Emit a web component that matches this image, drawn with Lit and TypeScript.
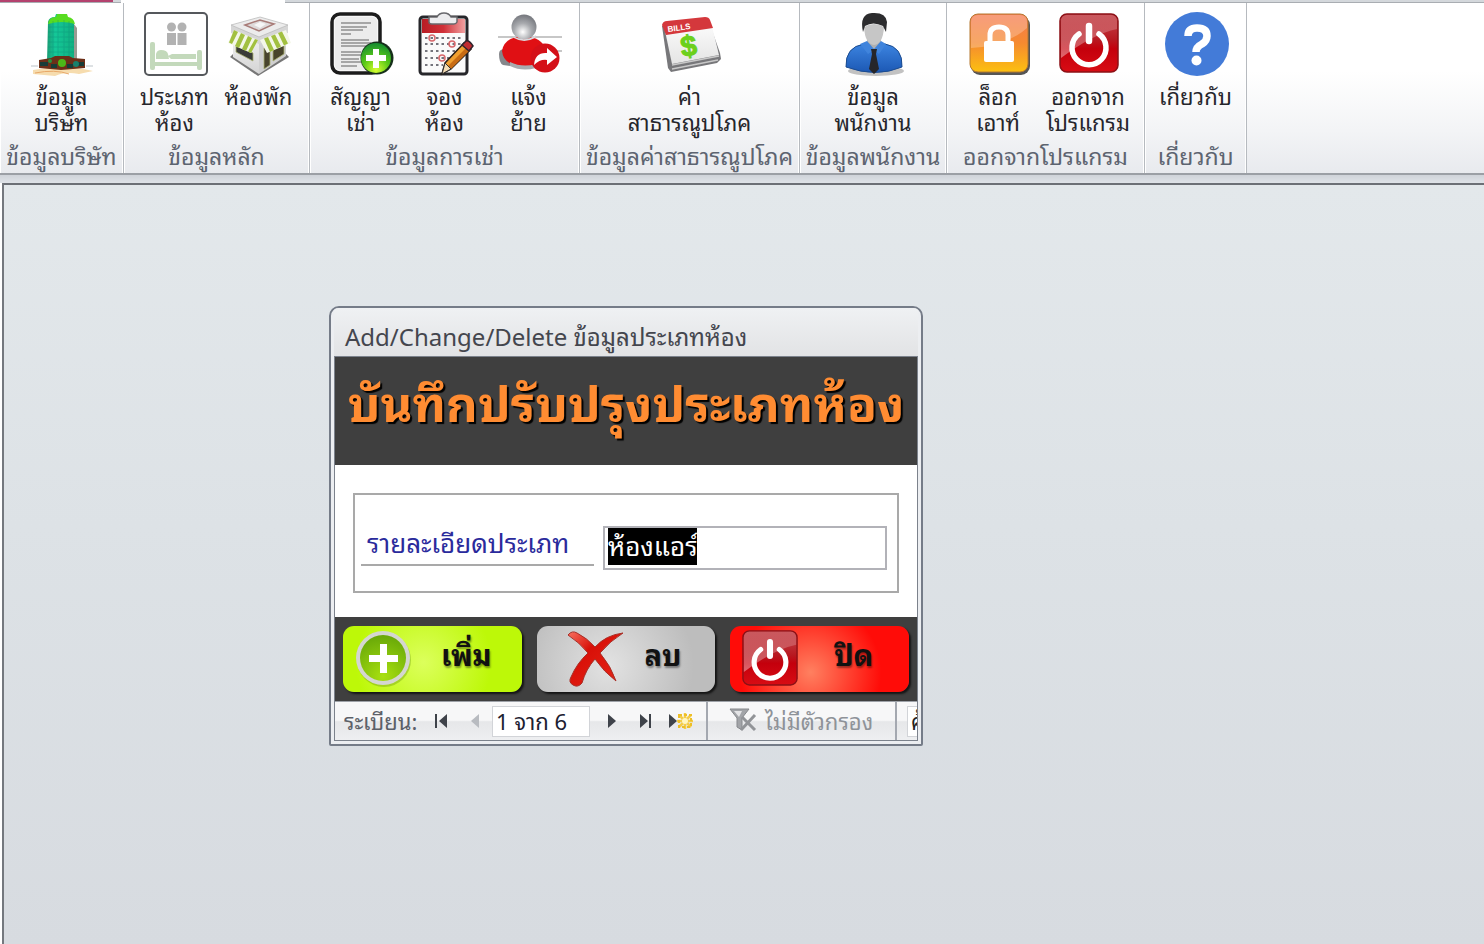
import { LitElement, html, css, svg } from "lit";
import { customElement, query } from "lit/decorators.js";

interface RibbonItem {
  icon: keyof typeof icons;
  lines: string[];
}
interface RibbonGroup {
  title: string;
  size: string;
  items: RibbonItem[];
}

const power = (id: string) => svg`
  <defs>
    <linearGradient id=${id} x1="0" y1="0" x2="0" y2="1">
      <stop offset="0" stop-color="#c4484e"/><stop offset=".45" stop-color="#b81820"/>
      <stop offset=".6" stop-color="#c4000c"/><stop offset="1" stop-color="#d80c14"/>
    </linearGradient>
    <linearGradient id="${id}g" x1="0" y1="0" x2="0" y2="1">
      <stop offset="0" stop-color="#fff" stop-opacity=".1"/><stop offset="1" stop-color="#fff" stop-opacity=".4"/>
    </linearGradient>
  </defs>
  <rect x="3" y="2" width="58" height="58" rx="7" fill="url(#${id})" stroke="#8c1016" stroke-width="1.5"/>
  <path d="M4 36V9q0-6 6-6h44q6 0 6 6v8Q36 22 4 46z" fill="url(#${id}g)"/>
  <path d="M22 22a17 17 0 1 0 20 0" fill="none" stroke="#fff" stroke-width="5.5" stroke-linecap="round"/>
  <path d="M32 14v15" stroke="#fff" stroke-width="6.5" stroke-linecap="round"/>`;

const icons = {
  tower: svg`
    <defs><linearGradient id="tw" x1="0" x2="1"><stop offset="0" stop-color="#1a9c74"/><stop offset=".3" stop-color="#14c898"/><stop offset="1" stop-color="#10b080"/></linearGradient></defs>
    <path d="M2 58q30-6 60 1l-14 3q-14-3-24 2L2 62z" fill="#f6dcae"/>
    <path d="M43 12l3 4v36h-5z" fill="#9a9a92"/>
    <path d="M17 10q1-5 7-5l1-3h10l1 4q6 0 7 6v38H16z" fill="url(#tw)"/>
    <path d="M17 12q1-7 8-7l1-3h10l1 3q6 1 7 7-13-4-27 0z" fill="#58dc20"/>
    <path d="M22 9v38M27 8v38M33 8v38M38 9v38M17 15h26M17 20h26M17 25h26M17 30h26M17 35h26M17 40h26" stroke="#0c8c78" stroke-width=".8" opacity=".45"/>
    <path d="M8 48l12-2 4-2h14l4 2 12 1v9l-24 2-22-2z" fill="#6c2f18"/>
    <path d="M9 52h8M20 54h6M36 54h6M46 52h7" stroke="#173c38" stroke-width="4"/>
    <circle cx="31" cy="51" r="4" fill="#4cb818"/><circle cx="19" cy="49" r="2" fill="#2a9040"/><circle cx="45" cy="52" r="3" fill="#18806c"/>
    <path d="M0 54h7M55 54h7" stroke="#bcc3c8"/>
    <path d="M4 61q20-4 34 1" stroke="#e8a868" fill="none"/>`,
  bed: svg`
    <rect x="1" y="1" width="62" height="62" rx="4" fill="#fff" stroke="#55585c" stroke-width="2"/>
    <g fill="#b2b2b2"><circle cx="27.500" cy="15" r="4.500"/><circle cx="38" cy="15" r="4.500"/><path d="M23 21h9v12h-9zM33.500 21h9v12h-9z"/></g>
    <g fill="#c3d9bb"><rect x="6" y="30" width="5" height="28" rx="2"/><rect x="53" y="38" width="5" height="20" rx="2"/>
    <rect x="10" y="50" width="44" height="4"/><path d="M12 47v-5q1-4 5-4 6 0 7 4l1 5zM27 47l-3-3 4-2h24v5z"/></g>`,
  shop: svg`
    <defs><linearGradient id="sh" x1="0" y1="0" x2="0" y2="1"><stop offset="0" stop-color="#f4f4f4"/><stop offset="1" stop-color="#d4d4d4"/></linearGradient></defs>
    <path d="M2 45l28 19 31-19-4-4H6z" fill="#777"/>
    <path d="M5 20l26 10v32L5 45z" fill="url(#sh)"/><path d="M31 30l27-10v24L31 62z" fill="#d0d0d0"/>
    <path d="M8 32l17 9v8L8 40z" fill="#3a3c38" stroke="#aab070" stroke-width=".8"/><path d="M36 36l6-3v20l-6 4zM45 34l11-5v13l-11 7z" fill="#48442c" stroke="#aab070" stroke-width=".8"/>
    <path d="M3 13l28 11 29-11v8L31 32 3 21z" fill="#d6d6d6"/><path d="M3 13L32 5l28 8-29 12z" fill="#ececec" stroke="#b4b4b4" stroke-width=".7"/>
    <path d="M17 13l15-5 14 4-15 7z" fill="#dedada" stroke="#a87c78" stroke-width="1.500"/><path d="M26 13l6-3 6 2-6 4z" fill="#f6f6f6"/>
    <path d="M6 18l24 10-7 13L0 31z" fill="#f4f7e8"/><path d="M58 18L32 28l7 13 24-10z" fill="#f4f7e8"/>
    <path d="M6 18l4 2-6 12-3-1.500zM13 21l4 2-6 13-4-2zM20 24l4 2-6 13-4-2zM27 27l3 1-7 13-3-1.500zM36 26.500l4-1.500 6 13-4 2zM43 24l4-1.500 6 12-4 2zM50 21l4-1.500 6 12-4 2z" fill="#a2c040"/>`,
  contract: svg`
    <defs><radialGradient id="ct" cx=".5" cy=".9" r=".9"><stop offset="0" stop-color="#d8ff30"/><stop offset=".5" stop-color="#58c818"/><stop offset="1" stop-color="#148c30"/></radialGradient></defs>
    <rect x="2" y="2" width="48" height="59" rx="8" fill="#f7f7f7" stroke="#1c1c1c" stroke-width="3.500"/>
    <rect x="5" y="5" width="42" height="53" rx="5" fill="#ececec"/>
    <path d="M11 11h30M11 15h26M11 18h22M11 22h10M11 28h28M11 31h30M11 34h26M11 40h20M11 43h22M11 47h18M11 50h20M11 54h16" stroke="#8e8e8e" stroke-width="1.500"/>
    <circle cx="47" cy="46" r="16.500" fill="#16301a"/><circle cx="46" cy="46" r="15" fill="url(#ct)"/>
    <path d="M43 37h6v6h7v6h-7v7h-6v-7h-7v-6h7z" fill="#fff"/>`,
  calendar: svg`
    <defs><linearGradient id="cl" x1="0" x2="1"><stop offset="0" stop-color="#b81c24"/><stop offset=".5" stop-color="#d03038"/><stop offset="1" stop-color="#f0a0a0"/></linearGradient></defs>
    <rect x="6" y="5" width="47" height="57" rx="3" fill="#fafafa" stroke="#26262a" stroke-width="3"/>
    <path d="M8 7h43v14H8z" fill="url(#cl)"/>
    <path d="M15 10V5h8q2-4 7-4t7 4h6v5q-1 2-3 2H18q-3 0-3-2z" fill="#ececee" stroke="#68686c" stroke-width="1.500"/>
    <path d="M11 26h36M11 32h36M11 39h30M11 46h26M11 53h18" stroke="#74747c" stroke-width="2" stroke-dasharray="2.500 3"/>
    <g fill="none" stroke="#d8686c" stroke-width="1.500"><circle cx="18" cy="26" r="3"/><circle cx="38" cy="32" r="3"/><circle cx="28" cy="46" r="3"/></g>
    <path d="M28 62l3-11L50 31l7 6-20 20z" fill="#f0a030" stroke="#2c2018" stroke-width="1.500"/><path d="M34 54l20-20 3 3-20 20z" fill="#c86c14"/>
    <path d="M28 62l3-11 6 6z" fill="#f4dcb4" stroke="#333" stroke-width="1"/><path d="M48 33l4-4q3-1 7 5l-4 5z" fill="#c02c30" stroke="#30242c" stroke-width="1.500"/>`,
  move: svg`
    <defs><radialGradient id="mv" cx=".45" cy=".7" r=".7"><stop offset="0" stop-color="#fff"/><stop offset=".5" stop-color="#a8aaae"/><stop offset="1" stop-color="#74767c"/></radialGradient></defs>
    <path d="M0 25h64M50 39h14" stroke="#8f8f8f"/>
    <path d="M1 42q0-5 6-5l6 3v14l-8-1q-4-2-4-11z" fill="#85878b"/>
    <path d="M4 39q2-14 22-15 18 1 22 14v13q-14 7-34 1-9-3-10-13z" fill="#e01014"/>
    <path d="M12 50q12 6 26 2v4q-14 4-26-2z" fill="#a8aaae"/>
    <circle cx="26" cy="15" r="12.500" fill="url(#mv)"/><path d="M15 24q11 7 23-1l-1 3q-11 6-21 0z" fill="#d8dade"/>
    <circle cx="47" cy="46" r="14.500" fill="#d41018"/><path d="M36 53q1-13 13-12v-5l10 9-10 8v-5q-7-1-13 5z" fill="#fff"/>`,
  bills: svg`
    <defs><linearGradient id="bl" x1="0" y1="0" x2="0" y2="1"><stop offset="0" stop-color="#fff"/><stop offset="1" stop-color="#e4e4e4"/></linearGradient></defs>
    <path d="M3 14l6 42 3 4 46-9 4-4-1-6-11-31z" fill="#77777a"/>
    <path d="M5 14l8 38 47-9-9-37z" fill="url(#bl)"/><path d="M13 53l47-9M13 57l46-9" stroke="#c8c8c8" stroke-width="1.500"/>
    <path d="M3 13q1-4 5-4l38-4q4 0 5 3l3 8-47 7z" fill="#d4383c"/>
    <text x="9" y="20" font-family="Liberation Sans" font-size="8" font-weight="700" fill="#fff" transform="rotate(-8 9 20)">BILLS</text>
    <text x="23" y="45" font-family="Liberation Sans" font-size="29" font-weight="700" fill="#6cd01c" stroke="#6cd01c" transform="rotate(-8 23 45)">$</text>`,
  user: svg`
    <defs><linearGradient id="us" x1="0" y1="0" x2="0" y2="1"><stop offset="0" stop-color="#3c84e0"/><stop offset="1" stop-color="#1c58b4"/></linearGradient></defs>
    <ellipse cx="34" cy="59" rx="28" ry="5" fill="#999" opacity=".6"/>
    <path d="M4 55q-1-20 18-23l9 4 12-4q18 3 17 23-26 11-56 0z" fill="url(#us)" stroke="#1c4c90"/>
    <path d="M25 26h14v9l-7 7-7-7z" fill="#b0b0b0"/><path d="M18 32l7-3 7 8 7-8 5 3-7 10-5-4-6 4z" fill="#4084dc"/>
    <path d="M29 37h6l-1 5 3 15-5 5-5-5 3-15z" fill="#26262a"/>
    <path d="M22 15q10-6 20 0-1 17-10 18-9-1-10-18z" fill="#c6c6c6"/>
    <path d="M21 20q-4-18 9-19 14-1 15 9l-1 10-3-6q-10-5-18 0z" fill="#2c2c2e"/>`,
  lock: svg`
    <defs><linearGradient id="lk" x1="0" y1="0" x2="0" y2="1"><stop offset="0" stop-color="#f47a50"/><stop offset=".5" stop-color="#f58a30"/><stop offset="1" stop-color="#fcc010"/></linearGradient></defs>
    <rect x="4" y="4" width="59" height="59" rx="9" fill="#555"/><rect x="3" y="2" width="58" height="58" rx="8" fill="url(#lk)" stroke="#b47830"/>
    <path d="M4 36V10q0-7 7-7h42q7 0 7 7v6Q40 34 4 36z" fill="#fff" opacity=".25"/>
    <path d="M23 32v-9q0-8 9-8t9 8v9" fill="none" stroke="#fff" stroke-width="5"/><rect x="17" y="29" width="30" height="21" rx="2" fill="#fff"/>`,
  power: power("pw"),
  help: svg`
    <circle cx="32" cy="32" r="32" fill="#437bd8"/>
    <path d="M23 24q0-8 9-8 10 0 10 8 0 5-5 8-6 3-6 8" fill="none" stroke="#fff" stroke-width="7.500"/><circle cx="31.500" cy="48.500" r="5" fill="#fff"/>`,
};

const groups: RibbonGroup[] = [
  { title: "ข้อมูลบริษัท", size: "g124", items: [{ icon: "tower", lines: ["ข้อมูล", "บริษัท"] }] },
  { title: "ข้อมูลหลัก", size: "g186", items: [{ icon: "bed", lines: ["ประเภท", "ห้อง"] }, { icon: "shop", lines: ["ห้องพัก"] }] },
  { title: "ข้อมูลการเช่า", size: "g270", items: [{ icon: "contract", lines: ["สัญญา", "เช่า"] }, { icon: "calendar", lines: ["จอง", "ห้อง"] }, { icon: "move", lines: ["แจ้ง", "ย้าย"] }] },
  { title: "ข้อมูลค่าสาธารณูปโภค", size: "g220", items: [{ icon: "bills", lines: ["ค่า", "สาธารณูปโภค"] }] },
  { title: "ข้อมูลพนักงาน", size: "g147", items: [{ icon: "user", lines: ["ข้อมูล", "พนักงาน"] }] },
  { title: "ออกจากโปรแกรม", size: "g198", items: [{ icon: "lock", lines: ["ล็อก", "เอาท์"] }, { icon: "power", lines: ["ออกจาก", "โปรแกรม"] }] },
  { title: "เกี่ยวกับ", size: "g102", items: [{ icon: "help", lines: ["เกี่ยวกับ"] }] },
];

@customElement("app-ribbon")
export class AppRibbon extends LitElement {
  static styles = css`
    :host { display: block; }
    .tabs { display: flex; height: 3px; background: #d4d8dc; border-bottom: 1px solid #a9adb2; box-sizing: border-box; }
    .file { width: 113px; height: 2px; background: #b4426e; }
    .tab { width: 164px; height: 3px; margin-left: 8px; background: #fff; }
    .groups { display: flex; height: 170px; background: linear-gradient(#fff 0, #fff 40%, #f3f4f6 75%, #e8eaee); }
    .group { display: flex; flex-direction: column; flex: none; box-sizing: border-box; border-right: 1px solid #b6babf; box-shadow: inset -1px 0 #fff, inset 1px 0 #fff; }
    .g124 { width: 124px; } .g186 { width: 186px; } .g270 { width: 270px; } .g220 { width: 220px; }
    .g147 { width: 147px; } .g198 { width: 198px; } .g102 { width: 102px; }
    .items { display: flex; justify-content: center; flex: 1; padding-top: 9px; }
    .item { display: flex; flex-direction: column; align-items: center; min-width: 84px; padding: 0; border: 0; background: none; font: inherit; font-size: 22px; line-height: 26px; color: #26262c; white-space: nowrap; }
    .g198 .items { padding-right: 5px; }
    .g198 .item { min-width: 90px; }
    .item svg { width: 64px; height: 64px; margin: 0 0 6px 2px; flex: none; overflow: visible; }
    .title { margin: 0 0 4px; font-size: 23px; font-weight: 400; line-height: 28px; color: #5d6470; text-align: center; white-space: nowrap; }
    .edge { height: 10px; border-top: 2px solid #9b9fa5; background: linear-gradient(#cfd3d9, #dfe3e8); box-sizing: border-box; }
  `;
  render() {
    return html`
      <div class="tabs"><div class="file"></div><div class="tab"></div></div>
      <nav class="groups">
        ${groups.map((g) => html`
          <section class="group ${g.size}">
            <div class="items">
              ${g.items.map((i) => html`
                <button class="item" type="button">
                  <svg viewBox="0 0 64 64" aria-hidden="true">${icons[i.icon]}</svg>
                  ${i.lines.map((l) => html`<span>${l}</span>`)}
                </button>`)}
            </div>
            <h2 class="title">${g.title}</h2>
          </section>`)}
      </nav>
      <div class="edge"></div>`;
  }
}

@customElement("room-type-dialog")
export class RoomTypeDialog extends LitElement {
  @query("#detail") private detail!: HTMLInputElement;

  static styles = css`
    :host { display: block; width: 594px; box-sizing: border-box; border: 2px solid #757c88; border-radius: 10px 10px 2px 2px; padding: 0 3px 3px; background: #eceef1; overflow: hidden; }
    input, button { font: inherit; box-sizing: border-box; }
    .caption { margin: 0; padding: 3px 10px 0 11px; height: 48px; box-sizing: border-box; font-size: 24px; font-weight: 400; line-height: 48px; color: #44464e; background: linear-gradient(#eff1f3, #e2e3e5); white-space: nowrap; }
    .frame { border: 1px solid #7c828c; overflow: hidden; }
    .head { height: 108px; background: #3f3f3f; text-align: center; }
    .head h1 { margin: 0; font-size: 49px; line-height: 86px; color: #ff8c32; text-shadow: 2px 2px 1px #000; white-space: nowrap; }
    .body { padding: 28px 18px 24px; background: #fff; }
    .field { display: flex; align-items: flex-start; height: 100px; box-sizing: border-box; padding: 31px 10px 0 6px; border: 2px solid #a9a9a9; }
    .field label { flex: 1; margin-right: 9px; padding: 0 0 8px 6px; font-size: 26px; line-height: 30px; color: #2a2a9c; border-bottom: 2px solid #a9a9a9; white-space: nowrap; }
    .field input { width: 284px; height: 44px; padding: 0 3px 8px; border: 2px solid #b2b2b8; outline: 0; font-family: "Liberation Sans", "Noto Sans Thai Looped", "Noto Looped Thai", sans-serif; font-size: 26px; line-height: 32px; color: #000; background: #fff; caret-color: transparent; }
    .field input::selection { color: #fff; background: #000; }
    .actions { display: grid; grid-template-columns: repeat(3, minmax(0, 1fr)); gap: 15px; padding: 9px 8px; background: #3f3f3f; }
    .act { display: flex; align-items: center; height: 66px; padding: 0 0 4px 12px; border: 0; border-radius: 11px; box-shadow: 2px 2px 2px #151515; font-size: 29px; font-weight: 700; color: #111; text-shadow: 1px 2px 2px rgba(0, 0, 0, .4); }
    .act svg { width: 56px; height: 56px; flex: none; overflow: visible; }
    .act span { flex: 1; padding-bottom: 8px; text-align: center; }
    .add { background: radial-gradient(circle at 45% 55%, #dcff5c, #bdf808 65%); }
    .del { padding: 0 12px 4px 30px; background: radial-gradient(circle at 40% 60%, #e2e2e2, #bdbdbd 75%); }
    .close { background: radial-gradient(circle at 45% 70%, #ff8060, #ff0c08 65%); }
    .nav { display: flex; align-items: center; height: 39px; box-sizing: border-box; border-top: 1px solid #9ea2a8; background: linear-gradient(#f7f7f8 0 48%, #e6e7e9 52%, #eeeff1); font-size: 22px; color: #5c6068; white-space: nowrap; }
    .nav label { flex: none; width: 80px; margin-left: 9px; line-height: 34px; padding-bottom: 2px; }
    .step { display: flex; width: 34px; height: 36px; flex: none; align-items: center; justify-content: center; padding: 0; border: 0; background: none; }
    .step svg { width: 26px; height: 16px; flex: none; overflow: visible; }
    .pos { width: 98px; height: 31px; flex: none; padding: 0 3px 2px; border: 1px solid #d2d4d8; background: #fff; color: #1c2030; }
    .filter { display: flex; align-items: center; flex: none; width: 191px; height: 38px; gap: 8px; margin-left: 14px; padding: 0 0 2px 21px; border: 0; border-left: 2px solid #a4a8b0; border-right: 2px solid #a4a8b0; background: none; color: #8e9298; }
    .filter svg { width: 28px; height: 24px; flex: none; }
    .search { width: 100px; height: 31px; flex: none; margin-left: 10px; padding: 0 3px 2px; border: 1px solid #d2d4d8; background: #fff; color: #222; }
  `;

  firstUpdated() {
    this.detail.focus({ preventScroll: true });
    this.detail.select();
  }

  private step(name: string, glyph: unknown, off = false) {
    return html`<button class="step" type="button" aria-label=${name} ?disabled=${off}>
      <svg viewBox="0 0 26 16" fill=${off ? "#b8bbc0" : "#3f434a"}>${glyph}</svg></button>`;
  }

  render() {
    return html`
      <h2 class="caption">Add/Change/Delete ข้อมูลประเภทห้อง</h2>
      <div class="frame">
        <div class="head"><h1>บันทึกปรับปรุงประเภทห้อง</h1></div>
        <div class="body">
          <div class="field">
            <label for="detail">รายละเอียดประเภท</label>
            <input id="detail" type="text" .value=${"ห้องแอร์"} />
          </div>
        </div>
        <div class="actions">
          <button class="act add" type="button">
            <svg viewBox="0 0 56 56" aria-hidden="true">
              <defs><radialGradient id="ad" cx=".5" cy=".9" r=".9"><stop offset="0" stop-color="#a8e010"/><stop offset="1" stop-color="#68a808"/></radialGradient></defs>
              <circle cx="29" cy="31" r="27" fill="#6f9c10" opacity=".4"/><circle cx="28" cy="29" r="27" fill="#d4d6d0"/><circle cx="28" cy="29" r="23" fill="url(#ad)"/>
              <path d="M25 15h7v11h11v7H32v11h-7V33H14v-7h11z" fill="#fff"/>
            </svg><span>เพิ่ม</span>
          </button>
          <button class="act del" type="button">
            <svg viewBox="0 0 56 56" aria-hidden="true">
              <defs><linearGradient id="dx" x1="0" y1="0" x2="1" y2="1"><stop offset="0" stop-color="#f87060"/><stop offset=".35" stop-color="#d81008"/><stop offset="1" stop-color="#e82818"/></linearGradient></defs>
              <path d="M1 6q4-5 9-2 10 5 18 14Q39 6 56 4 43 12 33 24q11 13 16 28-12-9-21-22-9 10-13 24-4 5-9 2-5-3-2-8 6-14 17-24Q12 13 1 6z" fill="url(#dx)" stroke="#a83028" stroke-width="1"/>
            </svg><span>ลบ</span>
          </button>
          <button class="act close" type="button">
            <svg viewBox="2 0 60 60" aria-hidden="true">${power("pc")}</svg><span>ปิด</span>
          </button>
        </div>
        <div class="nav">
          <label for="pos">ระเบียน:</label>
          ${this.step("แรก", svg`<path d="M7 1h2v14H7zM19 1v14l-8-7z"/>`)}
          ${this.step("ก่อนหน้า", svg`<path d="M17 1v14l-8-7z"/>`, true)}
          <input class="pos" id="pos" type="text" .value=${"1 จาก 6"} />
          ${this.step("ถัดไป", svg`<path d="M14 1v14l8-7z"/>`)}
          ${this.step("สุดท้าย", svg`<path d="M12 1v14l8-7zM21 1h2v14h-2z"/>`)}
          ${this.step("ใหม่", svg`<path d="M7 1v14l8-7z"/><path d="M23 0v16M15 8h16M17 2l12 12M29 2L17 14" stroke="#f4cc48" stroke-width="2.500"/><path d="M17 2h12v12H17z" fill="none" stroke="#edbf28" stroke-width="2" stroke-dasharray="3 2"/><circle cx="23" cy="8" r="3" fill="#fff6c0"/>`)}
          <button class="filter" type="button">
            <svg viewBox="0 0 28 24" aria-hidden="true"><path d="M1 1h19l-7 9v12l-5-3v-9z" fill="#a2a4a8" stroke="#86888c"/><path d="M5 3h8l-3 6z" fill="#e4e4e6"/><path d="M12 22L26 7M13 9l13 13" stroke="#929498" stroke-width="3"/></svg>
            <span>ไม่มีตัวกรอง</span>
          </button>
          <input class="search" type="text" aria-label="ค้นหา" .value=${"ค้นหา"} />
        </div>
      </div>`;
  }
}

@customElement("app-root")
export class AppRoot extends LitElement {
  static styles = css`
    :host { display: flex; flex-direction: column; min-height: 100vh; box-sizing: border-box; font-family: Waree, "Noto Sans Thai Looped", "Noto Looped Thai", Loma, Garuda, Tahoma, "DejaVu Sans Condensed", "Noto Sans Thai", sans-serif; overflow: hidden; }
    .desk { flex: 1; padding: 121px 0 20px 325px; border-top: 2px solid #6c7076; border-left: 2px solid #74787e; margin-left: 2px; background: linear-gradient(#e3e8eb, #dde2e6 45%, #d7dbe0); }
  `;
  render() {
    return html`<app-ribbon></app-ribbon><main class="desk"><room-type-dialog></room-type-dialog></main>`;
  }
}
